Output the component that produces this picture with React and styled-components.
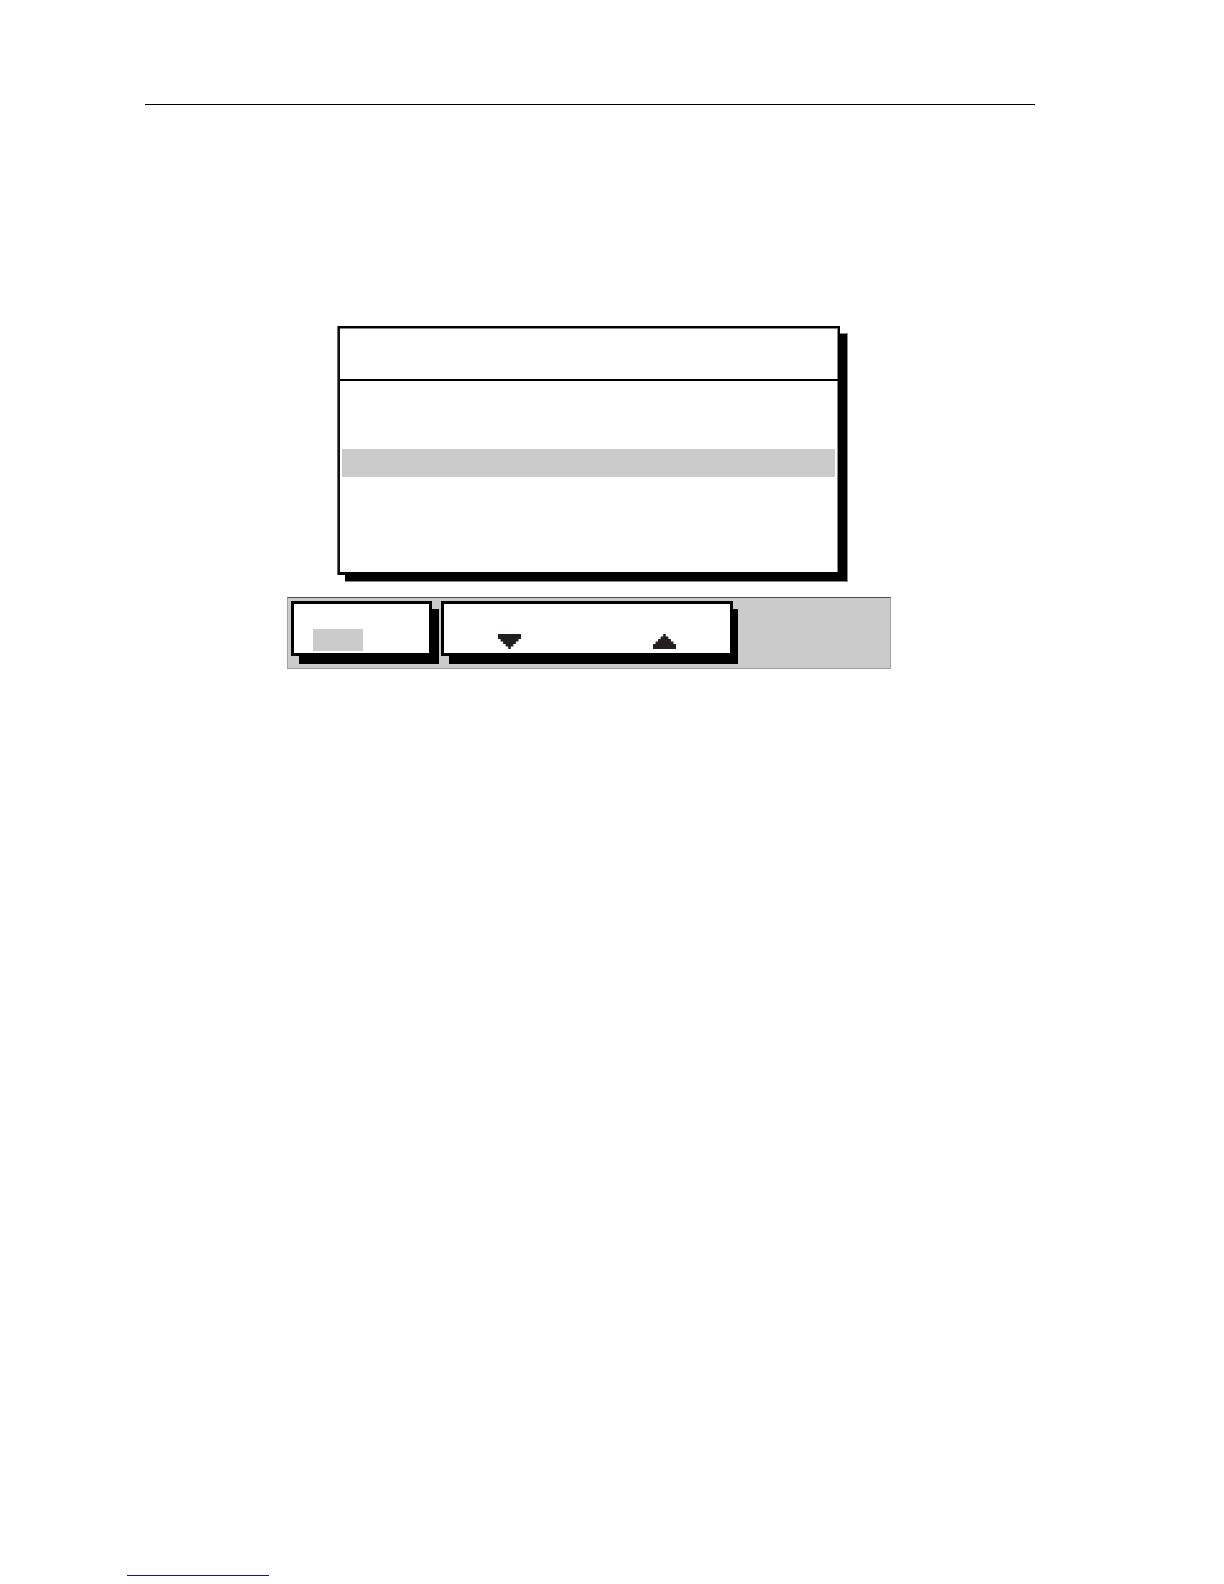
import React from "react";
import styled, { createGlobalStyle } from "styled-components";

export default function App() {
    return (
        <Page>
            <GlobalStyle />
            <Header />
            <Main>
                <Screen>
                    <DialogShadow $right={8} $bottom={7}>
                        <Dialog>
                            <DialogTitle />
                            <Rows>
                                <Row />
                                <Row />
                                <Row $selected />
                                <Row />
                                <Row />
                                <Row />
                            </Rows>
                        </Dialog>
                    </DialogShadow>
                    <SoftkeyBar>
                        <Shadow $right={7} $bottom={8}>
                            <Softkey $width={141} $padding="0 19px 2px">
                                <Chip type="button" aria-label="Select" />
                            </Softkey>
                        </Shadow>
                        <Shadow $right={5} $bottom={8}>
                            <Softkey $width={292} $padding="0 54px 4px">
                                <ArrowButton type="button" aria-label="Down">
                                    <ArrowDown />
                                </ArrowButton>
                                <ArrowButton type="button" aria-label="Up">
                                    <ArrowUp />
                                </ArrowButton>
                            </Softkey>
                        </Shadow>
                    </SoftkeyBar>
                </Screen>
            </Main>
            <Footer>
                <FooterLink href="#" aria-label="Home" />
            </Footer>
        </Page>
    );
}

function ArrowDown() {
    return (
        <Arrow viewBox="0 0 9 6" preserveAspectRatio="none">
            <path d="M0 0H9V2H8V3H7V4H6V5H5V6H4V5H3V4H2V3H1V2H0Z" />
        </Arrow>
    );
}

function ArrowUp() {
    return (
        <Arrow viewBox="0 0 9 6" preserveAspectRatio="none">
            <path d="M0 6H9V4H8V3H7V2H6V1H5V0H4V1H3V2H2V3H1V4H0Z" />
        </Arrow>
    );
}

const GlobalStyle = createGlobalStyle`
    * {
        box-sizing: border-box;
    }

    body {
        margin: 0;
        background: #fff;
        font-family: "Liberation Sans", Arial, sans-serif;
    }
`;

const Page = styled.div`
    display: flex;
    flex-direction: column;
    min-height: 100vh;
`;

const Header = styled.header`
    margin: 104px 189px 0 145px;
    border-top: 1px solid #000;
`;

const Main = styled.main`
    flex: 1;
    padding: 221px 190px 0 144px;
`;

const Screen = styled.section`
    display: flex;
    flex-direction: column;
    gap: 15px;
    max-width: 604px;
    margin: 0 auto;
`;

/* hard shadow, cut off at the padding on the right and bottom */
const Shadow = styled.div`
    padding: 0 ${(props) => props.$right}px ${(props) => props.$bottom}px 0;
    background: linear-gradient(#000, #000) 8px ${(props) => props.$bottom}px
        no-repeat;
`;

/* same shadow with a grey outer edge */
const DialogShadow = styled(Shadow)`
    margin: 0 43px 0 50px;
    background:
        linear-gradient(#000, #000) 8px 8px / calc(100% - 9px)
            calc(100% - 9px) no-repeat,
        linear-gradient(#888, #888) 8px 7px no-repeat;
`;

const Dialog = styled.div`
    border: 2px solid #000;
    border-width: 2px 2px 3px;
    border-left-color: #111;
    margin-left: 1px;
    background: #fff;
    box-shadow:
        -1px 0 #666,
        inset -1px 1px #888;
`;

const DialogTitle = styled.div`
    height: 53px;
    border-bottom: 2px solid #000;
`;

const Rows = styled.ul`
    display: flex;
    flex-direction: column;
    gap: 2px;
    margin: 0;
    padding: 8px 3px 5px 2px;
    list-style: none;
`;

const Row = styled.li`
    height: 28px;
    background: ${(props) => (props.$selected ? "#cbcbcb" : "transparent")};
`;

const SoftkeyBar = styled.div`
    display: flex;
    gap: 2px;
    padding: 3px 3px 4px;
    border: 1px solid #a0a0a0;
    border-top-color: #4c4c4c;
    background: #cbcbcb;
`;

const Softkey = styled.div`
    display: flex;
    align-items: flex-end;
    justify-content: space-between;
    width: ${(props) => props.$width}px;
    height: 55px;
    padding: ${(props) => props.$padding};
    border: 3px solid #000;
    background: #fff;
`;

const Chip = styled.button`
    width: 50px;
    height: 22px;
    padding: 0;
    border: 0;
    background: #cbcbcb;
`;

const ArrowButton = styled.button`
    display: flex;
    padding: 0;
    border: 0;
    background: none;
`;

const Arrow = styled.svg`
    display: block;
    width: 23px;
    height: 15px;
    fill: #231f20;
`;

const Footer = styled.footer`
    padding: 0 127px 8px;
`;

const FooterLink = styled.a`
    display: block;
    width: 142px;
    border-bottom: 1px solid #1414a0;
`;
